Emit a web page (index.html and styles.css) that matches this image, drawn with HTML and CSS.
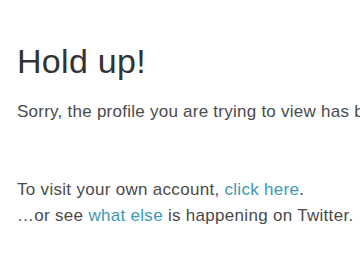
FILE: index.html
```html
<!DOCTYPE html>
<html>
<head>
<meta charset="utf-8">
<link rel="stylesheet" href="styles.css">
</head>
<body>
<div class="page">
  <h1 class="title">Hold up!</h1>
  <p class="lead">Sorry, the profile you are trying to view has been suspended.</p>
  <div class="more">
    <p class="line">To visit your own account, <a href="#" class="link">click here</a>.</p>
    <p class="line">…or see <a href="#" class="link">what else</a> is happening on Twitter.</p>
  </div>
</div>
</body>
</html>
```
FILE: styles.css
```css
html, body {
  margin: 0;
  padding: 0;
  background: #ffffff;
  overflow: hidden;
}
.page {
  width: 360px;
  height: 270px;
  padding: 44px 0 0 17px;
  box-sizing: border-box;
  font-family: "Liberation Sans", Arial, sans-serif;
  white-space: nowrap;
  overflow: hidden;
}
.title {
  margin: 0;
  font-size: 34px;
  font-weight: normal;
  line-height: 34px;
  letter-spacing: 0.3px;
  color: #333333;
}
.lead {
  margin: 26px 0 0;
  font-size: 17px;
  line-height: 16px;
  letter-spacing: 0.25px;
  color: #4a4a4a;
}
.more {
  margin-top: 57px;
}
.line {
  margin: 0;
  font-size: 17px;
  line-height: 26px;
  letter-spacing: 0.3px;
  color: #4a4a4a;
}
.link {
  color: #3d98b3;
  text-decoration: none;
}
```
